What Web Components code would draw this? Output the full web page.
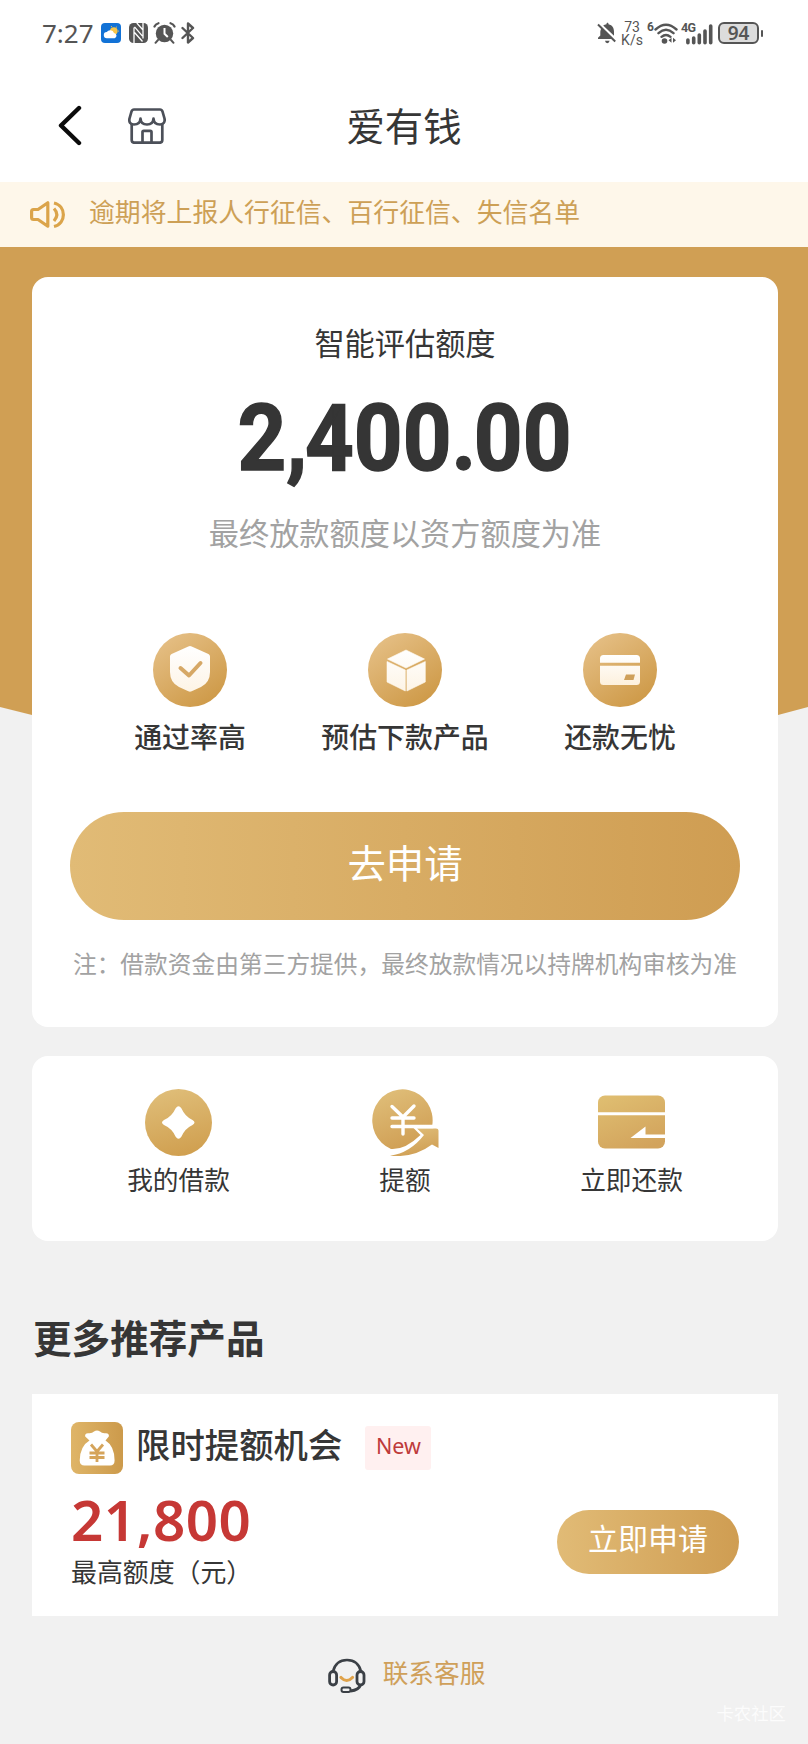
<!DOCTYPE html>
<html lang="zh-CN">
<head>
<meta charset="utf-8">
<title>爱有钱</title>
<style>
html, body { margin: 0; padding: 0; }
body {
  width: 808px; height: 1744px; overflow: hidden; background: #f1f1f1; color: #363636;
  font-family: "Noto Sans", "Noto Sans CJK SC", sans-serif;
}
</style>
</head>
<body>
<loan-page></loan-page>
<script>
const define = (name, html) => {
  const tpl = document.createElement('template');
  tpl.innerHTML = html;
  customElements.define(name, class extends HTMLElement {
    constructor() {
      super();
      this.attachShadow({ mode: 'open' }).appendChild(tpl.content.cloneNode(true));
    }
  });
};

const ICONS = {
  back: [24, 42, `<path d="M21 3 3 20.500 21 38" fill="none" stroke="#0b0b0b" stroke-width="4.400" stroke-linecap="round" stroke-linejoin="round"/>`],
  shop: [38, 36, `<g fill="none" stroke="#4c5059" stroke-width="2.700" stroke-linecap="round" stroke-linejoin="round"><path d="M6 1.500H32c1.500 0 2 .6 2.500 2l2 7c.8 4-1.500 6-4.500 6-3.600 0-6.300-2-6.500-6-.2 4-3 6-6.500 6s-6.300-2-6.500-6c-.2 4-3 6-6.500 6s-5.300-2-4.500-6l2-7c.5-1.400 1-2 2.500-2Z"/><path d="M3.700 16V32c0 1.700 1 2.700 2.700 2.700H31.600c1.700 0 2.700-1 2.700-2.700V16M14.500 34V24c0-.8.4-1.200 1.200-1.200h6.600c.8 0 1.200.4 1.200 1.200V34"/></g>`],
  speaker: [37, 32, `<g fill="none" stroke="#dba44a" stroke-width="3.200" stroke-linejoin="round"><path d="M4.500 10.500H9L18.800 3.800V27.200L9 20.500H4.500Q2.600 20.500 2.600 18.600V12.400Q2.600 10.500 4.500 10.500Z"/><path d="M25 9.500q5.600 6 0 12.500"/><path d="M25 4C37.500 7 37.500 24.500 25 27.500"/></g>`],
  weather: [20, 20, `<rect width="20" height="20" rx="4" fill="#1272d6"/><circle cx="12.800" cy="8" r="3.800" fill="#f7c548"/><g fill="#f7c548"><circle cx="10.500" cy="3.600" r=".6"/><circle cx="15.500" cy="4" r=".6"/><circle cx="17.500" cy="8" r=".6"/></g><path d="M6 15.300a3.100 3.100 0 0 1-.2-6.200 4 4 0 0 1 7.200.8 2.800 2.800 0 0 1 .7 5.400Z" fill="#fff"/>`],
  nfc: [19, 20, `<rect width="19" height="20" rx="4.500" fill="#555"/><path d="M5 4.500V20M14 0V15.500M5.500 3.800 13.500 13.200M5.500 9.500 13.500 18.500M7.800 0 14 7" fill="none" stroke="#fff" stroke-width="1.300"/>`],
  alarm: [23, 22, `<g stroke="#555" stroke-linecap="round"><circle cx="11.500" cy="11.500" r="8.700" fill="#555" stroke="none"/><path d="M1.500 4.500Q2.500 2 5.500 1.200M21.500 4.500Q20.500 2 17.500 1.200" fill="none" stroke-width="2.200"/><path d="M5 18 2.500 20.800M18 18l2.500 2.800" stroke-width="2"/></g><path d="M11.500 6v5.800l3.300 3.200" stroke="#fff" stroke-width="2" fill="none"/>`],
  bluetooth: [14, 22, `<path d="M1.500 6 12 16 7 20.500V1.500L12 6 1.500 16" fill="none" stroke="#555" stroke-width="2.400" stroke-linejoin="round" stroke-linecap="round"/>`],
  mute: [20, 22, `<path d="M9.500 2.200C9.500.4 11.500.4 11.500 2.200c4 .8 5.500 3.800 5.500 7.500v4L6.200 3.600Q7.500 2.500 9.500 2.200ZM4.600 6 15.500 17H1v-1.300l2.300-2.200V9.700Q3.400 7.500 4.600 6ZM8 18.800h4.600q-.4 2.400-2.300 2.400T8 18.800Z" fill="#555"/><path d="M1 2.500 18.200 19.500" stroke="#555" stroke-width="2"/>`],
  wifi: [24, 23, `<g fill="none" stroke="#555" stroke-width="2.400" stroke-linecap="round"><path d="M1.500 7.500Q12 -2 22.500 7.500M4.500 11.200Q12 4.500 19.500 11.200M7.500 14.800Q12 11 16.500 14.800"/></g><circle cx="10.500" cy="19" r="2.800" fill="#555"/><path d="m17.500 15.800v5l-3-2.500ZM19 15.800v5l3-2.500Z" fill="#555"/>`],
  signal: [27, 21, `<g stroke="#555" stroke-width="3.600" stroke-linecap="round"><path d="M1.900 16V18.700M7.700 14V18.700M13.300 11V18.700M19 7V18.700M24.700 2V18.700"/></g>`],
  shield: [74, 74, `<defs><linearGradient id="g" x1=".15" y1=".05" x2=".8" y2="1"><stop stop-color="#e5bf85"/><stop offset="1" stop-color="#cd9845"/></linearGradient><linearGradient id="w" x2="0" y2="1"><stop stop-color="#fff"/><stop offset="1" stop-color="#fdf4e6"/></linearGradient></defs><circle cx="37" cy="37" r="37" fill="url(#g)"/><path d="M35.300 13.500q1.700-.9 3.400 0L55.400 21q1.600.8 1.600 2.500V39q0 10.500-9 15l-9.300 4.300q-1.700.8-3.400 0L26 54q-9-4.500-9-15V23.500q0-1.700 1.600-2.500Z" fill="url(#w)"/><path d="m27.500 35 8.500 7.500L47.500 30" fill="none" stroke="#d6a866" stroke-width="4" stroke-linecap="round" stroke-linejoin="round"/>`],
  cube: [74, 74, `<defs><linearGradient id="g" x1=".15" y1=".05" x2=".8" y2="1"><stop stop-color="#e5bf85"/><stop offset="1" stop-color="#cd9845"/></linearGradient><linearGradient id="w" x2="0" y2="1"><stop stop-color="#fff"/><stop offset="1" stop-color="#fdf4e6"/></linearGradient></defs><circle cx="37" cy="37" r="37" fill="url(#g)"/><path d="M38 17 56.500 26 38 35 19.500 26ZM19 28.500 37.300 37V58L19 49ZM57.300 28.500 38.900 37V58L57.300 49Z" fill="url(#w)" stroke="#fffaf0" stroke-width=".6" stroke-linejoin="round"/>`],
  card: [74, 74, `<defs><linearGradient id="g" x1=".15" y1=".05" x2=".8" y2="1"><stop stop-color="#e5bf85"/><stop offset="1" stop-color="#cd9845"/></linearGradient><linearGradient id="w" x2="0" y2="1"><stop stop-color="#fff"/><stop offset="1" stop-color="#fdf0dd"/></linearGradient></defs><circle cx="37" cy="37" r="37" fill="url(#g)"/><path d="M17 29.800V25.500q0-3.500 3.500-3.500H53.500q3.500 0 3.500 3.500v4.300ZM17 32.700H57V48.500q0 3.500-3.500 3.500H20.500q-3.500 0-3.500-3.500Z" fill="url(#w)"/><path d="M43 41.500h9l-1.500 5.500H41Z" fill="#cfa05a"/>`],
  loan: [67, 67, `<defs><linearGradient id="g" x1=".35" y1="0" x2=".6" y2="1"><stop stop-color="#dfbd78"/><stop offset="1" stop-color="#d09f4f"/></linearGradient></defs><circle cx="33.500" cy="33.500" r="33.500" fill="url(#g)"/><path d="M30.500 19.500Q33.500 15 36.500 19.500 40 27.500 47.500 31 51.500 33.500 47.500 36 40 39.500 36.500 47.500 33.500 52 30.500 47.500 27 39.500 19 36 15 33.500 19 31 27 27.500 30.500 19.500Z" fill="#fff"/>`],
  raise: [67, 67, `<defs><linearGradient id="g" x1=".3" y1="0" x2=".7" y2="1"><stop stop-color="#dfbd78"/><stop offset="1" stop-color="#cf9d52"/></linearGradient></defs><path d="M60.300 36A30.200 31 0 1 0 19 60Q33 61 48.500 46L40 37.500H60.300Z" fill="url(#g)"/><path d="M18 66.800Q38 64 52 46L45 39.500H64q2.500 0 2.500 2V59L60 55.500Q42 69 18 66.800Z" fill="url(#g)"/><g fill="none" stroke="#fff" stroke-width="3.400" stroke-linecap="round"><path d="M20 17.500 31 28 42 17M20 29H42M20 37.500H61M31 28V45"/></g>`],
  repay: [67, 67, `<defs><linearGradient id="g" x1=".2" y1="0" x2=".7" y2="1"><stop stop-color="#dfbd70"/><stop offset="1" stop-color="#d2a35c"/></linearGradient></defs><rect y="6.500" width="67" height="53" rx="7" fill="url(#g)"/><path d="M0 24.800H67" stroke="#fff" stroke-width="3"/><path d="M67 45.500H47.500V37.500L32.500 49H67Z" fill="#fff"/>`],
  bag: [52, 52, `<defs><linearGradient id="g" x2="1"><stop stop-color="#dfb568"/><stop offset="1" stop-color="#cc9a4b"/></linearGradient></defs><rect width="52" height="52" rx="8" fill="url(#g)"/><path d="M18.500 18.500 14.200 14.500Q13.500 11.500 17 11.200 21 11.800 23 9.500 26 7.500 29 9.500 31 11.800 35 11.200 38.500 11.500 37.800 14.500L34.500 18.500Q43.500 24 43.600 38.500 43.500 43.500 39 43.500H13.500Q8.800 43.500 8.700 38.500 9 24 18.500 18.500Z" fill="#fff"/><path d="m20 22.500 6 7 6-7M18.500 31H33.500M18.500 35.500H33.500M26 30V40" fill="none" stroke="#d5a45b" stroke-width="2.800"/>`],
  service: [38, 36, `<g fill="none" stroke="#3b4046" stroke-width="2.800"><path d="M5 13.500C7 5.500 12 2 19 2S31 5.500 33 13.500" stroke-width="2.700"/><rect x="1.600" y="13.500" width="7" height="13.500" rx="3.500"/><rect x="29" y="13.500" width="7" height="13.500" rx="3.500"/><path d="M32.500 27Q31 32 22.500 33"/><rect x="13.500" y="29.500" width="9" height="4.600" rx="2" stroke-width="2"/></g><path d="M13 19.500Q18.700 25.500 24.500 19.500" fill="none" stroke="#e0a34a" stroke-width="3.200" stroke-linecap="round"/>`]
};

/* <ui-icon name="..."> draws one glyph of the set at its natural size */
customElements.define('ui-icon', class extends HTMLElement {
  connectedCallback() {
    if (this.shadowRoot) return;
    const [w, h, body] = ICONS[this.getAttribute('name')];
    this.attachShadow({ mode: 'open' }).innerHTML =
      `<style>:host{display:block;flex:none;width:${w}px;height:${h}px}svg{display:block}</style>
       <svg width="${w}" height="${h}" viewBox="0 0 ${w} ${h}">${body}</svg>`;
  }
});

define('status-bar', `<style>
:host{display:flex;box-sizing:border-box;height:64px;padding:2px 45px 0 42px;align-items:center;justify-content:space-between;color:#555}
.l,.r{display:flex;align-items:center}
.t{font-size:26px;line-height:30px;width:59px}
.nfc{margin-left:8px}.al{margin-left:5px}.bt{margin-left:5px}
.speed{font-size:14px;text-align:center;width:24px;margin:1px 0 0 3px;font-family:Roboto,sans-serif}
.speed div{height:13px;line-height:13px}
.six{font:700 12px/12px Roboto,sans-serif;margin:-13px 0 0 3px;width:7px}
.cell{display:grid;width:32px;height:23px;margin-left:3px}
.cell>*{grid-area:1/1}
.cell span{font:700 12.500px/12px Roboto,sans-serif;letter-spacing:-.7px}
.cell ui-icon{align-self:end;justify-self:end}
.bat{box-sizing:border-box;width:41px;height:22px;border:2px solid #555;border-radius:6px;background:#dcdcdc;font-size:19px;line-height:18px;font-weight:600;text-align:center;margin-left:5px}
.nub{width:2px;height:7px;background:#555;margin-left:2px;border-radius:1px}
</style>
<div class="l"><span class="t">7:27</span><ui-icon name="weather"></ui-icon><ui-icon class="nfc" name="nfc"></ui-icon><ui-icon class="al" name="alarm"></ui-icon><ui-icon class="bt" name="bluetooth"></ui-icon></div>
<div class="r"><ui-icon name="mute"></ui-icon><div class="speed"><div>73</div><div>K/s</div></div><span class="six">6</span><ui-icon name="wifi"></ui-icon><div class="cell"><span>4G</span><ui-icon name="signal"></ui-icon></div><div class="bat">94</div><div class="nub"></div></div>`);

define('nav-bar', `<style>
:host{display:grid;grid-template-columns:1fr auto 1fr;align-items:center;height:118px;box-sizing:border-box;padding-top:5px}
.l{display:flex;align-items:center;gap:46px;padding-left:58px}
.t{font-size:38.400px;line-height:50px}
</style>
<div class="l"><ui-icon name="back"></ui-icon><ui-icon name="shop"></ui-icon></div><div class="t"><slot></slot></div><div></div>`);

define('notice-bar', `<style>
:host{display:flex;align-items:center;height:65px;background:#fef7ea;color:#cda056;padding-left:29px;font-size:25.850px;line-height:40px}
.t{margin:-5px 0 0 23px;white-space:nowrap}
</style><ui-icon name="speaker"></ui-icon><div class="t"><slot></slot></div>`);

define('icon-cell', `<style>
:host{display:flex;flex-direction:column;align-items:center;white-space:nowrap;font-size:var(--cell-size);font-weight:var(--cell-weight);line-height:40px}
div{margin-top:var(--cell-gap)}
</style><slot name="icon"></slot><div><slot></slot></div>`);

define('pill-button', `<style>
:host{display:block;box-sizing:border-box;border-radius:60px;background:linear-gradient(90deg,#e1bb76,#cf9d52);color:#fff;text-align:center;white-space:nowrap}
</style><slot></slot>`);

define('quota-card', `<style>
:host{display:grid;height:809px}
.gold,.card{grid-area:1/1}
.gold{height:508px;background:#d09f54;clip-path:polygon(0 0,100% 0,100% 460px,778px 468px,32px 468px,0 460px)}
.card{z-index:1;margin:30px 30px 0 32px;height:750px;border-radius:16px;background:#fff;display:flex;flex-direction:column;align-items:center;box-sizing:border-box;padding-top:47px;white-space:nowrap}
.h{font-size:30.200px;line-height:40px}
.n{font:700 93.500px/100px Roboto,sans-serif;margin-top:24px;transform:scaleX(.91);color:#353535;-webkit-text-stroke:1.500px #353535}
.n i{font-style:normal;letter-spacing:-2.500px}
.s{font-size:30.200px;line-height:40px;margin-top:26px;color:#a2a2a2}
.f{display:grid;grid-template-columns:repeat(3,215px);margin-top:79px;--cell-size:27.900px;--cell-weight:500;--cell-gap:10px}
pill-button{width:670px;height:108px;margin-top:54px;font-size:38.400px;line-height:102px}
.note{font-size:23.720px;line-height:40px;margin-top:24px;color:#a2a2a2}
</style>
<div class="gold"></div>
<div class="card">
<div class="h">智能评估额度</div>
<div class="n">2<i>,</i>400<i>.</i>00</div>
<div class="s">最终放款额度以资方额度为准</div>
<div class="f"><icon-cell><ui-icon slot="icon" name="shield"></ui-icon>通过率高</icon-cell><icon-cell><ui-icon slot="icon" name="cube"></ui-icon>预估下款产品</icon-cell><icon-cell><ui-icon slot="icon" name="card"></ui-icon>还款无忧</icon-cell></div>
<pill-button style="margin-top:55px">去申请</pill-button>
<div class="note">注：借款资金由第三方提供，最终放款情况以持牌机构审核为准</div>
</div>`);

define('quick-actions', `<style>
:host{display:grid;grid-template-columns:repeat(3,226.500px);justify-content:center;box-sizing:border-box;height:185px;margin:0 30px 0 32px;padding-top:33px;background:#fff;border-radius:16px;--cell-size:25.700px;--cell-weight:400;--cell-gap:5px}
</style>
<icon-cell><ui-icon slot="icon" name="loan"></ui-icon>我的借款</icon-cell><icon-cell><ui-icon slot="icon" name="raise"></ui-icon>提额</icon-cell><icon-cell><ui-icon slot="icon" name="repay"></ui-icon>立即还款</icon-cell>`);

define('product-card', `<style>
:host{display:flex;justify-content:space-between;align-items:flex-end;box-sizing:border-box;height:222px;margin:0 30px 0 32px;padding:28px 39px 0;background:#fff;white-space:nowrap}
.info{align-self:flex-start}
.top{display:flex;align-items:center;height:52px}
.name{font-size:34.400px;font-weight:500;line-height:44px;margin:-7px 0 0 13px}
.tag{width:66px;height:44px;margin-left:23px;border-radius:3px;background:#fff0f0;color:#be3a3b;font-size:21.500px;line-height:40px;text-align:center}
.num{font-size:56.500px;font-weight:650;line-height:70px;color:#c63835;margin-top:11px;letter-spacing:.5px}
.cap{font-size:25.900px;line-height:36px;margin-top:-1px}
pill-button{width:182px;height:64px;margin-bottom:42px;font-size:30px;line-height:58px}
</style>
<div class="info"><div class="top"><ui-icon name="bag"></ui-icon><div class="name">限时提额机会</div><div class="tag">New</div></div>
<div class="num">21,800</div><div class="cap">最高额度（元）</div></div>
<pill-button>立即申请</pill-button>`);

define('page-footer', `<style>
:host{display:grid;height:128px}
.c,.w{grid-area:1/1}
.c{display:flex;justify-content:center;height:120px;align-items:center;gap:17px;padding-left:5px;color:#cfa05a;font-size:25.700px;line-height:40px;box-sizing:border-box}
.c span{margin-top:-4px}
.w{align-self:end;justify-self:end;margin:0 22px 16px 0;font-size:17.400px;line-height:30px;color:#fff;opacity:.8}
</style>
<div class="c"><ui-icon name="service"></ui-icon><span>联系客服</span></div><div class="w">卡农社区</div>`);

define('loan-page', `<style>
:host{display:block;width:808px;height:1744px}
header{background:#fff}
h2{margin:0;padding:72px 0 0 33px;height:81px;font-size:38.600px;font-weight:600;line-height:50px}
</style>
<header><status-bar></status-bar><nav-bar>爱有钱</nav-bar></header>
<notice-bar>逾期将上报人行征信、百行征信、失信名单</notice-bar>
<main><quota-card></quota-card><quick-actions></quick-actions><h2>更多推荐产品</h2><product-card></product-card></main>
<page-footer></page-footer>`);
</script>
</body>
</html>
